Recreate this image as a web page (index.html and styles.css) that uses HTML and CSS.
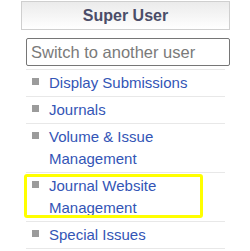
FILE: index.html
```html
<!DOCTYPE html>
<html lang="en">

<head>
    <meta charset="UTF-8">
    <meta name="viewport" content="width=device-width, initial-scale=1.0">
    <title>Super User</title>
    <link rel="stylesheet" href="styles.css">
</head>

<body>
    <div class="sidebar">
        <!-- header -->
        <div class="sidebar-header">Super User</div>

        <!-- switch user -->
        <input type="text" class="switch-user" placeholder="Switch to another user">

        <!-- menu -->
        <ul class="menu">
            <li><span class="bullet"></span><a href="#">Display Submissions</a></li>
            <li><span class="bullet"></span><a href="#">Journals</a></li>
            <li><span class="bullet"></span><a href="#">Volume &amp; Issue Management</a></li>
            <li class="highlighted"><span class="bullet"></span><a href="#">Journal Website Management</a></li>
            <li><span class="bullet"></span><a href="#">Special Issues</a></li>
        </ul>
    </div>
</body>

</html>
```
FILE: styles.css
```css
body {
    font-family: "Liberation Sans", Arial, sans-serif;
    margin: 0;
    background: #fff;
}

.sidebar {
    margin: 1px 0 0 21px;
    width: 209px;
}

.sidebar-header {
    height: 29px;
    box-sizing: border-box;
    border: 1px solid #cfcfcf;
    background: linear-gradient(#ebebeb, #fff);
    text-align: center;
    font-size: 16px;
    font-weight: bold;
    line-height: 27px;
    color: #4b4d68;
}

.switch-user {
    display: block;
    margin: 8px 0 0 5px;
    width: 204px;
    height: 28px;
    box-sizing: border-box;
    border: 1px solid #767676;
    border-radius: 2px;
    padding: 0 4px;
    font-family: "Liberation Sans", Arial, sans-serif;
    font-size: 16.5px;
    color: #333;
}

.switch-user::placeholder {
    color: #7a7a7a;
}

.menu {
    list-style: none;
    margin: 3px 0 0 5px;
    padding: 0;
    width: 199px;
}

.menu li {
    position: relative;
    display: flex;
    align-items: flex-start;
    border-top: 1px solid #e8e8e8;
    padding: 2px 0 2px 6px;
    font-size: 15px;
    line-height: 22px;
}

.menu li:last-child {
    border-bottom: 1px solid #e8e8e8;
}

.bullet {
    flex: none;
    width: 7px;
    height: 7px;
    margin: 6px 10px 0 0;
    background: #9b9b9b;
}

.menu a {
    color: #3355b6;
    text-decoration: none;
}

.highlighted::after {
    content: "";
    position: absolute;
    top: 1px;
    left: -2px;
    width: 179px;
    height: 44px;
    box-sizing: border-box;
    border: 3px solid #ffff00;
    border-radius: 3px;
}
```
